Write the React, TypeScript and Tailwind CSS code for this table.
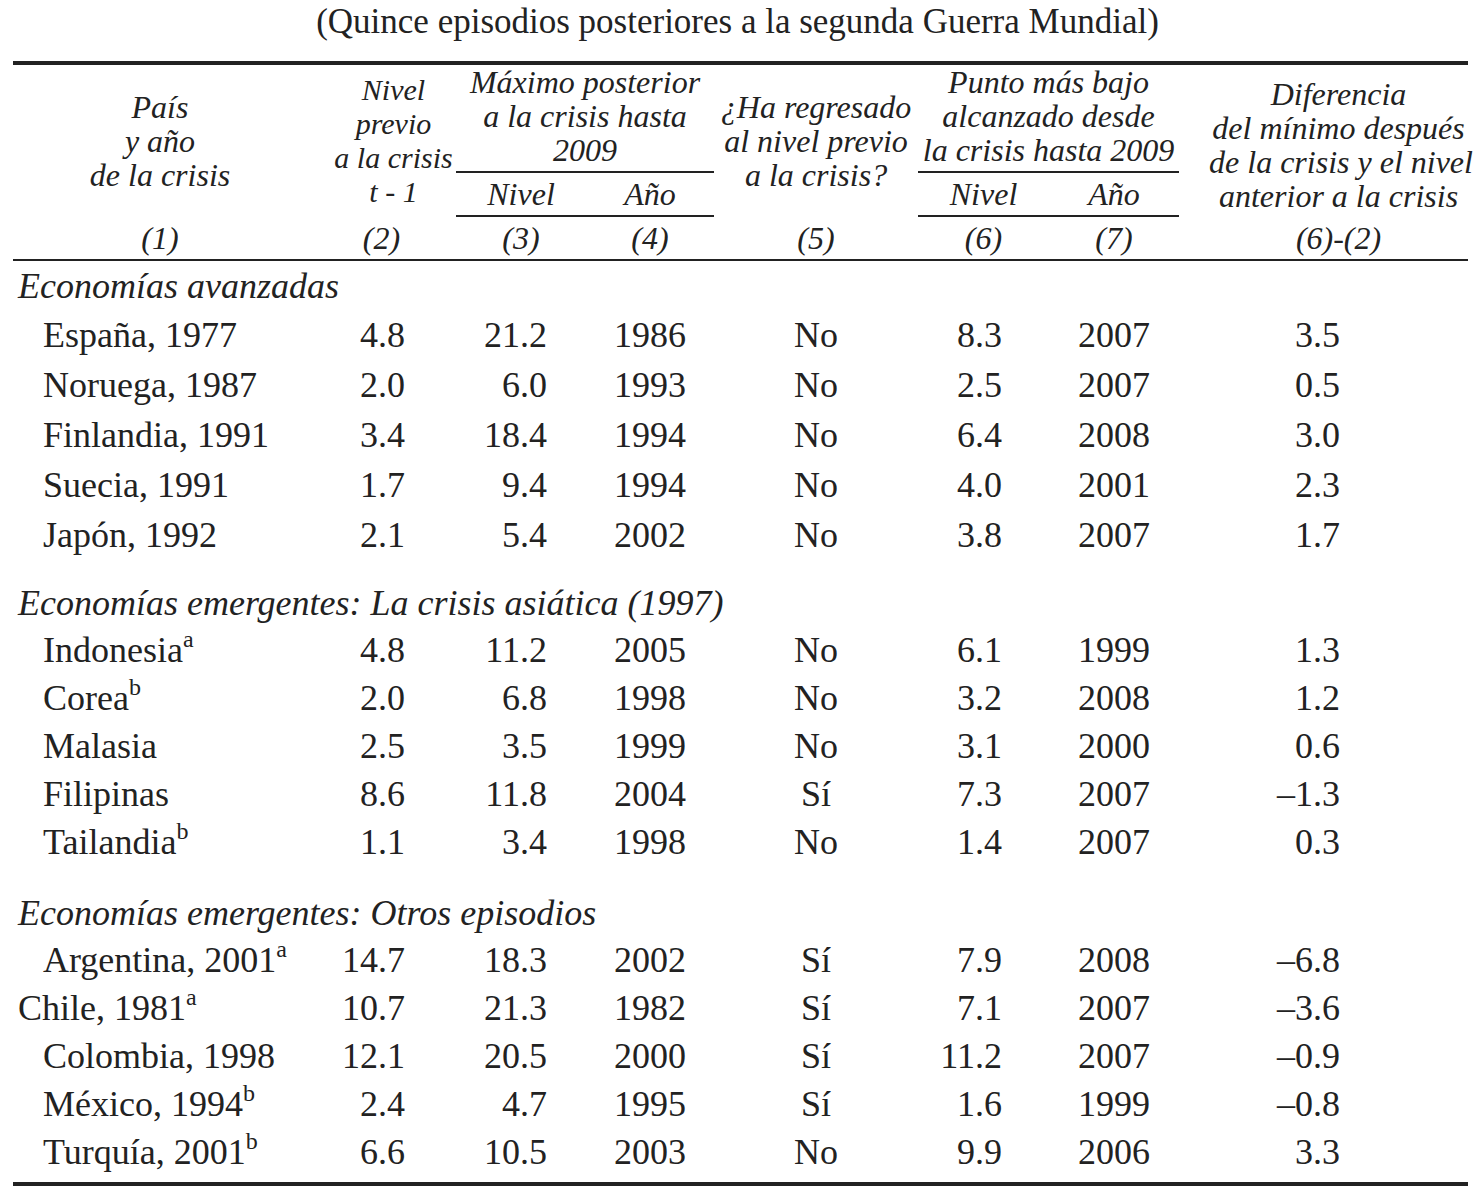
type Row = {
  name: string;
  sup?: string;
  indent?: boolean;
  v: [string, string, string, string, string, string, string];
};

type Section = { title: string; rows: Row[]; rowH: string; first?: boolean; gap?: string };

const sections: Section[] = [
  {
    title: 'Economías avanzadas',
    first: true,
    rowH: 'h-[50px]',
    rows: [
      { name: 'España, 1977', v: ['4.8', '21.2', '1986', 'No', '8.3', '2007', '3.5'] },
      { name: 'Noruega, 1987', v: ['2.0', '6.0', '1993', 'No', '2.5', '2007', '0.5'] },
      { name: 'Finlandia, 1991', v: ['3.4', '18.4', '1994', 'No', '6.4', '2008', '3.0'] },
      { name: 'Suecia, 1991', v: ['1.7', '9.4', '1994', 'No', '4.0', '2001', '2.3'] },
      { name: 'Japón, 1992', v: ['2.1', '5.4', '2002', 'No', '3.8', '2007', '1.7'] },
    ],
  },
  {
    title: 'Economías emergentes: La crisis asiática (1997)',
    rowH: 'h-[48px]',
    gap: 'h-[20px]',
    rows: [
      { name: 'Indonesia', sup: 'a', v: ['4.8', '11.2', '2005', 'No', '6.1', '1999', '1.3'] },
      { name: 'Corea', sup: 'b', v: ['2.0', '6.8', '1998', 'No', '3.2', '2008', '1.2'] },
      { name: 'Malasia', v: ['2.5', '3.5', '1999', 'No', '3.1', '2000', '0.6'] },
      { name: 'Filipinas', v: ['8.6', '11.8', '2004', 'Sí', '7.3', '2007', '–1.3'] },
      { name: 'Tailandia', sup: 'b', v: ['1.1', '3.4', '1998', 'No', '1.4', '2007', '0.3'] },
    ],
  },
  {
    title: 'Economías emergentes: Otros episodios',
    rowH: 'h-[48px]',
    gap: 'h-[24px]',
    rows: [
      { name: 'Argentina, 2001', sup: 'a', v: ['14.7', '18.3', '2002', 'Sí', '7.9', '2008', '–6.8'] },
      { name: 'Chile, 1981', sup: 'a', indent: false, v: ['10.7', '21.3', '1982', 'Sí', '7.1', '2007', '–3.6'] },
      { name: 'Colombia, 1998', v: ['12.1', '20.5', '2000', 'Sí', '11.2', '2007', '–0.9'] },
      { name: 'México, 1994', sup: 'b', v: ['2.4', '4.7', '1995', 'Sí', '1.6', '1999', '–0.8'] },
      { name: 'Turquía, 2001', sup: 'b', v: ['6.6', '10.5', '2003', 'No', '9.9', '2006', '3.3'] },
    ],
  },
];

// alignment per value column (2..8)
const valueCls = [
  'text-right pr-[51px]',
  'text-right pr-[39px]',
  'text-center',
  'text-center',
  'text-right pr-[47px]',
  'text-center',
  'text-right pr-[128px]',
];

export default function App() {
  return (
    <div className="min-h-screen bg-white text-[#222] font-['Liberation_Serif',serif]">
      {/* Title */}
      <div className="h-[61px] text-center text-[35px] leading-[44px]">
        (Quince episodios posteriores a la segunda Guerra Mundial)
      </div>

      <table className="ml-[13px] w-[1455px] table-fixed border-collapse">
        <colgroup>
          <col className="w-[318px]" />
          <col className="w-[125px]" />
          <col className="w-[130px]" />
          <col className="w-[128px]" />
          <col className="w-[204px]" />
          <col className="w-[131px]" />
          <col className="w-[130px]" />
          <col className="w-[289px]" />
        </colgroup>
        <thead className="italic text-[32px] leading-[34px] whitespace-nowrap">
          <tr className="border-t-4 border-[#222]">
            <th rowSpan={2} className="p-0 pr-[24px] font-normal align-middle">
              País
              <br />y año
              <br />
              de la crisis
            </th>
            <th rowSpan={2} className="p-0 text-[30px] font-normal align-middle">
              Nivel
              <br />
              previo
              <br />a la crisis
              <br />t - 1
            </th>
            <th colSpan={2} className="p-0 pb-[4px] font-normal border-b-2 border-[#222]">
              Máximo posterior
              <br />a la crisis hasta
              <br />
              2009
            </th>
            <th rowSpan={2} className="p-0 font-normal align-middle">
              ¿Ha regresado
              <br />
              al nivel previo
              <br />a la crisis?
            </th>
            <th colSpan={2} className="p-0 pb-[4px] font-normal border-b-2 border-[#222]">
              Punto más bajo
              <br />
              alcanzado desde
              <br />
              la crisis hasta 2009
            </th>
            <th rowSpan={2} className="p-0 pt-[8px] pl-[30px] font-normal align-middle">
              Diferencia
              <br />
              del mínimo después
              <br />
              de la crisis y el nivel
              <br />
              anterior a la crisis
            </th>
          </tr>
          <tr className="h-[44px]">
            <th className="p-0 font-normal border-b-2 border-[#222]">Nivel</th>
            <th className="p-0 font-normal border-b-2 border-[#222]">Año</th>
            <th className="p-0 font-normal border-b-2 border-[#222]">Nivel</th>
            <th className="p-0 font-normal border-b-2 border-[#222]">Año</th>
          </tr>
          <tr className="h-[44px] border-b-2 border-[#222]">
            <th className="p-0 pr-[24px] font-normal">(1)</th>
            <th className="p-0 pr-[24px] font-normal">(2)</th>
            <th className="p-0 font-normal">(3)</th>
            <th className="p-0 font-normal">(4)</th>
            <th className="p-0 font-normal">(5)</th>
            <th className="p-0 font-normal">(6)</th>
            <th className="p-0 font-normal">(7)</th>
            <th className="p-0 pl-[30px] font-normal">(6)-(2)</th>
          </tr>
        </thead>
        <tbody className="text-[36px] leading-[40px]">
          {sections.map((s) => (
            <SectionRows key={s.title} section={s} />
          ))}
        </tbody>
      </table>
      <div className="ml-[13px] mt-[6px] h-[4px] w-[1455px] bg-[#222]" />
    </div>
  );
}

function SectionRows({ section }: { section: Section }) {
  return (
    <>
      {section.gap && (
        <tr className={section.gap}>
          <td colSpan={8} className="p-0" />
        </tr>
      )}
      <tr className={section.first ? 'h-[50px]' : 'h-[46px]'}>
        <td colSpan={8} className="p-0 pl-[5px] italic whitespace-nowrap">
          {section.title}
        </td>
      </tr>
      {section.rows.map((r) => (
        <tr key={r.name} className={section.rowH}>
          <td className={`p-0 whitespace-nowrap ${r.indent === false ? 'pl-[5px]' : 'pl-[30px]'}`}>
            {r.name}
            {r.sup && <sup className="text-[24px] -top-[15px]">{r.sup}</sup>}
          </td>
          {r.v.map((v, i) => (
            <td key={i} className={`p-0 whitespace-nowrap ${valueCls[i]}`}>
              {v}
            </td>
          ))}
        </tr>
      ))}
    </>
  );
}
